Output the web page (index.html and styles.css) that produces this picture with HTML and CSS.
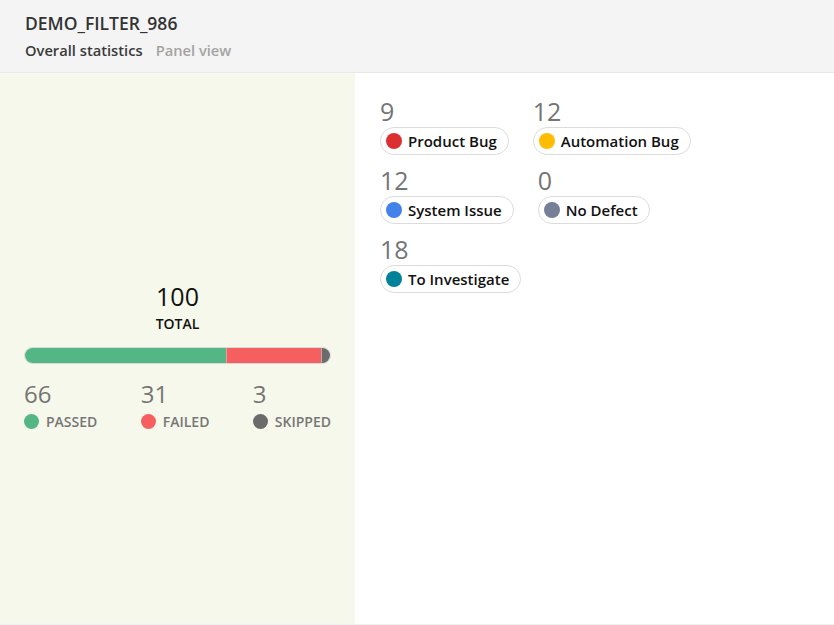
FILE: index.html
```html
<!DOCTYPE html>
<html>
<head>
<meta charset="utf-8">
<link rel="stylesheet" href="styles.css">
</head>
<body>
<div class="page">
  <header class="header">
    <div class="title">DEMO_FILTER_986</div>
    <div class="tabs">
      <span class="tab active">Overall statistics</span>
      <span class="tab">Panel view</span>
    </div>
  </header>
  <main class="main">
    <section class="summary">
      <div class="summary-inner">
        <div class="total">
          <div class="total-num">100</div>
          <div class="total-label">TOTAL</div>
        </div>
        <div class="bar">
          <div class="seg seg-passed" style="width:66%"></div>
          <div class="seg seg-failed" style="width:31%"></div>
          <div class="seg seg-skipped" style="width:3%"></div>
        </div>
        <div class="stats">
          <div class="stat">
            <div class="stat-num">66</div>
            <div class="stat-label"><span class="dot passed"></span>PASSED</div>
          </div>
          <div class="stat">
            <div class="stat-num">31</div>
            <div class="stat-label"><span class="dot failed"></span>FAILED</div>
          </div>
          <div class="stat">
            <div class="stat-num">3</div>
            <div class="stat-label"><span class="dot skipped"></span>SKIPPED</div>
          </div>
        </div>
      </div>
    </section>
    <section class="defects">
      <div class="defect">
        <div class="defect-num">9</div>
        <div class="pill"><span class="dot pb"></span>Product Bug</div>
      </div>
      <div class="defect">
        <div class="defect-num">12</div>
        <div class="pill"><span class="dot ab"></span>Automation Bug</div>
      </div>
      <div class="defect">
        <div class="defect-num">12</div>
        <div class="pill"><span class="dot si"></span>System Issue</div>
      </div>
      <div class="defect">
        <div class="defect-num">0</div>
        <div class="pill"><span class="dot nd"></span>No Defect</div>
      </div>
      <div class="defect">
        <div class="defect-num">18</div>
        <div class="pill"><span class="dot ti"></span>To Investigate</div>
      </div>
    </section>
  </main>
</div>
</body>
</html>
```

FILE: styles.css
```css
* { box-sizing: border-box; }
html, body { margin: 0; padding: 0; }
body {
  font-family: "Open Sans", "Noto Sans", sans-serif;
  background: #fff;
  width: 834px;
  height: 625px;
  overflow: hidden;
}
.page { display: flex; flex-direction: column; height: 625px; }
.header {
  height: 73px;
  background: #f4f4f4;
  border-bottom: 1px solid #e8e8e8;
  padding: 11px 25px 0;
}
.title {
  font-size: 17.5px;
  font-weight: 600;
  color: #333;
  line-height: 24px;
}
.tabs { display: flex; gap: 13px; margin-top: 5px; }
.tab { font-size: 14.7px; font-weight: 600; color: #a3a3a3; line-height: 20px; }
.tab.active { color: #3a3a3a; }

.main { flex: 1; display: flex; border-bottom: 1px solid #f0f0f0; }
.summary {
  width: 355px;
  background: #f5f8eb;
  display: flex;
  align-items: center;
  padding: 0 24px;
}
.summary-inner { width: 100%; margin-top: 16px; }
.total { text-align: center; }
.total-num { font-size: 25px; font-weight: 500; color: #111; line-height: 28px; }
.total-label { font-size: 14px; font-weight: 600; color: #111; line-height: 20px; margin-top: 4px; }
.bar {
  display: flex;
  height: 17px;
  margin-top: 13px;
  border: 1px solid #d9d9d9;
  border-radius: 9px;
  overflow: hidden;
  background: #fff;
}
.seg { height: 100%; }
.seg-passed { background: #55b685; }
.seg-failed { background: #f65f5f; border-left: 1px solid #e2a0a0; }
.seg-skipped { background: #6b6b6b; border-left: 1px solid #b0b0b0; }
.stats { display: flex; justify-content: space-between; margin-top: 15px; }
.stat-num { font-size: 24px; color: #757575; line-height: 30px; }
.stat-label {
  display: flex; align-items: center; gap: 7px;
  font-size: 14px; font-weight: 600; color: #777; line-height: 20px;
  margin-top: 3px;
}
.dot { width: 15px; height: 15px; border-radius: 50%; display: inline-block; flex: none; }
.dot.passed { background: #55b685; }
.dot.failed { background: #f65f5f; }
.dot.skipped { background: #6b6b6b; }

.defects {
  flex: 1;
  display: flex;
  flex-wrap: wrap;
  align-content: flex-start;
  column-gap: 24px;
  row-gap: 10px;
  padding: 23px 120px 0 25px;
}
.defect { display: flex; flex-direction: column; align-items: flex-start; }
.defect-num { font-size: 25px; color: #757575; line-height: 31px; }
.pill {
  display: flex; align-items: center; gap: 6px;
  height: 28px;
  padding: 0 11px 0 5px;
  border: 1px solid #dcdcdc;
  border-radius: 14px;
  background: #fff;
  font-size: 15px; font-weight: 600; color: #111;
}
.pill .dot { width: 16px; height: 16px; }
.dot.pb { background: #dc2f2f; }
.dot.ab { background: #ffbc00; }
.dot.si { background: #4382e8; }
.dot.nd { background: #777f96; }
.dot.ti { background: #00829b; }
```
